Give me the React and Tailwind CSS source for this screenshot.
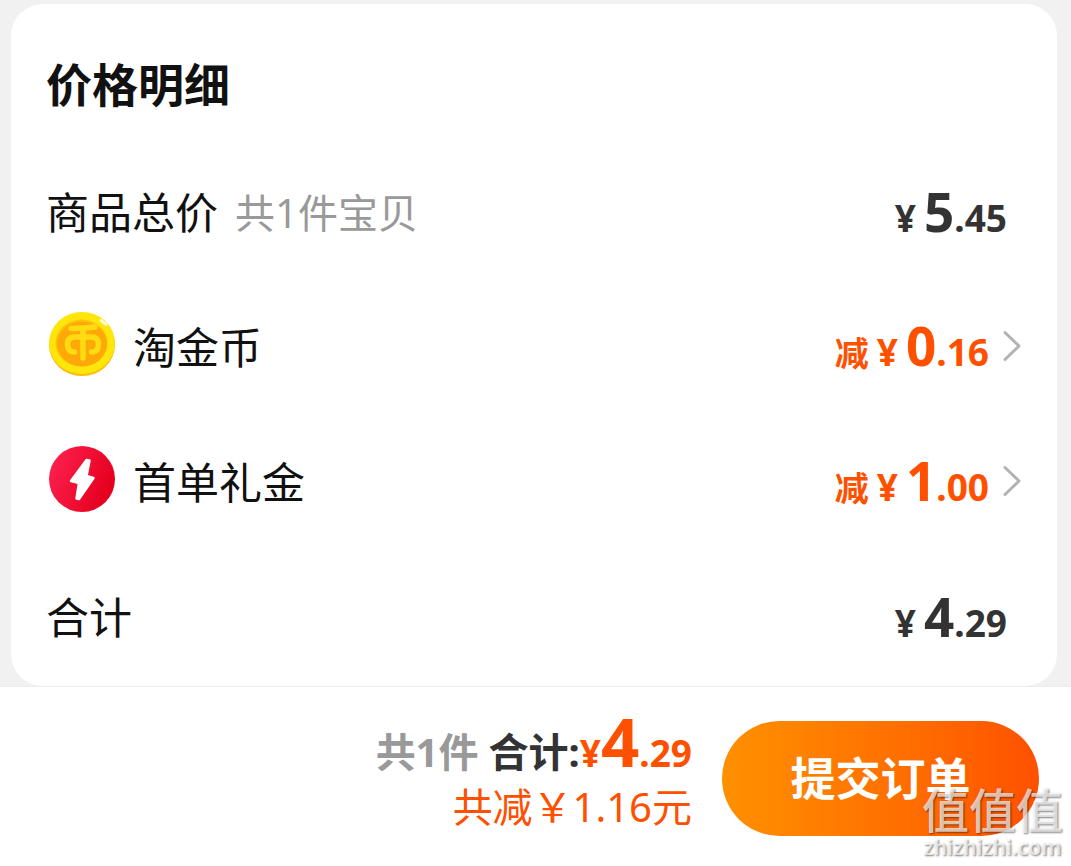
const rows = [
    { id: 'goods', label: '商品总价', note: '共1件宝贝', whole: '5', cents: '.45' },
    { id: 'coin', label: '淘金币', Icon: CoinIcon, whole: '0', cents: '.16', minus: true },
    { id: 'gift', label: '首单礼金', Icon: BoltIcon, whole: '1', cents: '.00', minus: true },
    { id: 'sum', label: '合计', whole: '4', cents: '.29' },
]

function CoinIcon() {
    return (
        <svg viewBox="0 0 66 66" className="size-[66px] mb-2 ml-[3px] shrink-0" aria-hidden="true">
            <ellipse cx="33" cy="34" rx="33" ry="31" fill="#ffba08" />
            <ellipse cx="33" cy="32" rx="33" ry="31" fill="#ffe60a" />
            <ellipse cx="32.5" cy="32" rx="26" ry="23.5" fill="#ffc20a" />
            <ellipse cx="33" cy="33" rx="25" ry="22.5" fill="#ffa908" />
            <g fill="none" stroke="#ffdc12" strokeWidth="5.5" strokeLinecap="round" strokeLinejoin="round">
                <path d="M22 17.500C30 17.500 38 17 46 16" />
                <path d="M34 18V47" />
                <path d="M25.500 41C20 41 18.500 37 18.500 33C18.500 28 22 26 27 26H41C46 26 49.500 28 49.500 33C49.500 37 48 41 42.500 41" />
            </g>
            <path d="M52 9.500L57 13.500" stroke="#fffbd0" strokeWidth="3" strokeLinecap="round" />
        </svg>
    )
}

function BoltIcon() {
    return (
        <svg viewBox="0 0 66 66" className="size-[66px] mb-2 ml-[3px] shrink-0" aria-hidden="true">
            <defs>
                <linearGradient id="bolt" x1="0" y1="0" x2="1" y2="0.4">
                    <stop offset="0" stopColor="#ff2453" />
                    <stop offset="1" stopColor="#e6001f" />
                </linearGradient>
            </defs>
            <circle cx="33" cy="33" r="33" fill="url(#bolt)" />
            <path
                d="M37.500 14L22 35L30 37L27.500 52.500L30 53L44.500 32L37.500 30L40.500 14.500Z"
                fill="#fff"
                stroke="#fff"
                strokeWidth="2.500"
                strokeLinejoin="round"
            />
        </svg>
    )
}

function Chevron() {
    return (
        <svg viewBox="0 0 18 32" className="w-[18px] h-8 ml-[14px] mb-1 shrink-0" aria-hidden="true">
            <path d="M2 2.500L16 16L2 29.500" fill="none" stroke="#b2b2b2" strokeWidth="3" strokeLinecap="round" strokeLinejoin="round" />
        </svg>
    )
}

function PriceRow({ label, note, Icon, whole, cents, minus }) {
    return (
        <li className="flex h-[135px] items-center justify-between">
            <div className="flex items-center">
                {Icon && <Icon />}
                <span className={Icon ? 'ml-[18px] text-[43px] leading-[60px]' : 'text-[43px] leading-[60px]'}>{label}</span>
                {note && <span className="ml-[17px] text-[40px] leading-[60px] text-[#999]">{note}</span>}
            </div>
            <div className={minus ? 'flex items-center text-[#ff5000]' : 'flex items-center pr-[14px] text-[#333]'}>
                <p className="flex items-baseline pt-1 text-[37px] leading-[60px] font-bold">
                    {minus && <span className="mr-2 text-[34px]">减</span>}
                    <span>¥</span>
                    <span className="ml-2 text-[53px]">{whole}</span>
                    <span>{cents}</span>
                </p>
                {minus && <Chevron />}
            </div>
        </li>
    )
}

function Watermark() {
    return (
        <div className="pointer-events-none absolute right-2 bottom-[7px] text-center text-white/70 [text-shadow:1px_1px_2px_rgba(0,0,0,0.5)]">
            <p className="text-[47px] leading-[50px] font-medium">值值值</p>
            <p className="text-[21px] leading-6 font-semibold">zhizhizhi.com</p>
        </div>
    )
}

export default function App() {
    return (
        <div className="flex min-h-screen flex-col bg-[#f1f1f1] pt-1 font-['Noto_Sans','Noto_Sans_CJK_SC',sans-serif] text-[#111]">
            <main className="mr-[14px] ml-[11px] rounded-[32px] bg-white pt-[47px] pr-9 pb-px pl-[35px]">
                <h1 className="pb-7 text-[46px] leading-[66px] font-bold">价格明细</h1>
                <ul>
                    {rows.map(row => (
                        <PriceRow key={row.id} {...row} />
                    ))}
                </ul>
            </main>

            <footer className="relative flex grow items-start justify-end border-t border-[#ececec] bg-white pt-6 pr-8">
                <div className="mr-[30px] text-right">
                    <p className="flex items-baseline justify-end text-[40px] leading-[60px] font-bold">
                        <span className="text-[#999]">共1件</span>
                        <span className="ml-[10px] text-[#333]">合计:</span>
                        <span className="flex items-baseline text-[37px] text-[#ff5000]">
                            ¥<span className="text-[67px]">4</span>.29
                        </span>
                    </p>
                    <p className="text-[40px] leading-[48px] text-[#ff5000]">共减￥1.16元</p>
                </div>
                <button
                    type="button"
                    className="mt-[10px] h-[115px] w-[317px] shrink-0 rounded-full bg-linear-to-r from-[#ff9000] to-[#ff5000] text-[45px] font-bold text-white"
                >
                    提交订单
                </button>
                <Watermark />
            </footer>
        </div>
    )
}
